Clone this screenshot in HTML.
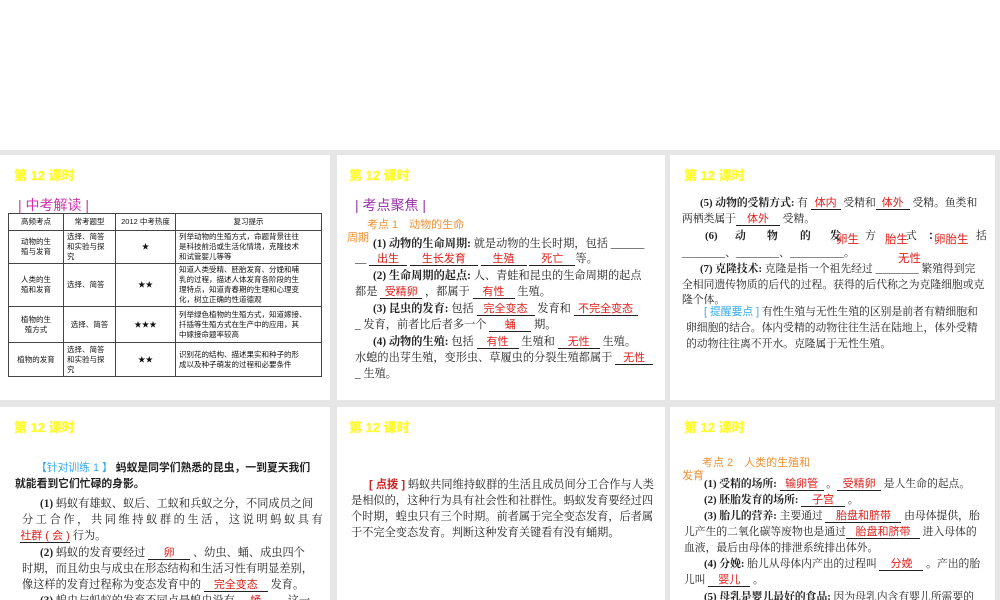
<!DOCTYPE html>
<html><head><meta charset="utf-8">
<style>
body{margin:0;width:1000px;height:600px;position:relative;overflow:hidden;background:#fff;font-family:"Liberation Serif","Noto Serif CJK SC",serif;}
.bg{position:absolute;left:0;top:150px;width:1000px;height:450px;background:#e6e6e6;}
.s{position:absolute;background:#fff;overflow:hidden;}
.t{position:absolute;left:14px;top:10px;font:bold 13px "Liberation Sans","Noto Sans CJK SC",sans-serif;color:#ffff22;text-shadow:0 0 1px #f0e060;}
.l{position:absolute;font-size:11.2px;line-height:16px;color:#222;white-space:nowrap;}
.s3 .l{font-size:10.8px;}
.r{color:#e0201c;font-family:"Liberation Sans","Noto Sans CJK SC",sans-serif;font-size:11px;display:inline-block;border-bottom:1px solid #222;line-height:12px;text-align:center;}
.rr{position:absolute;color:#e0201c;font:11.5px "Liberation Sans","Noto Sans CJK SC",sans-serif;}
.b{font-weight:bold;}
.sec{position:absolute;font:14px "Liberation Sans","Noto Sans CJK SC",sans-serif;}
table{position:absolute;left:8px;top:213px;width:314px;border-collapse:collapse;font:7.5px "Liberation Sans","Noto Sans CJK SC",sans-serif;color:#111;}
td{border:1px solid #444;padding:1px 3px;line-height:10px;}
.or{color:#f09030;font-family:"Liberation Sans","Noto Sans CJK SC",sans-serif;}
</style></head><body>
<div class="bg"></div>

<div class="s" style="left:0;top:155px;width:330px;height:245px;">
<div class="t">第 12 课时</div>
<div class="sec" style="left:18px;top:40px;color:#cc33aa;">| 中考解读 |</div>
</div>
<table style="top:213px;">
<tr style="height:17px"><td style="width:48px;text-align:center">高频考点</td><td style="width:45px;text-align:center">常考题型</td><td style="width:53px;text-align:center">2012 中考热度</td><td style="text-align:center">复习提示</td></tr>
<tr style="height:33px"><td style="text-align:center">动物的生<br>殖与发育</td><td>选择、简答<br>和实验与探<br>究</td><td style="text-align:center">★</td><td>列举动物的生殖方式，命题背景往往<br>是科技前沿或生活化情境，克隆技术<br>和试管婴儿等等</td></tr>
<tr style="height:43px"><td style="text-align:center">人类的生<br>殖和发育</td><td>选择、简答</td><td style="text-align:center">★★</td><td>知道人类受精、胚胎发育、分娩和哺<br>乳的过程，描述人体发育各阶段的生<br>理特点，知道青春期的生理和心理变<br>化，树立正确的性道德观</td></tr>
<tr style="height:36px"><td style="text-align:center">植物的生<br>殖方式</td><td style="text-align:center">选择、简答</td><td style="text-align:center">★★★</td><td>列举绿色植物的生殖方式，知道嫁接、<br>扦插等生殖方式在生产中的应用，其<br>中嫁接命题率较高</td></tr>
<tr style="height:34px"><td style="text-align:center">植物的发育</td><td>选择、简答<br>和实验与探<br>究</td><td style="text-align:center">★★</td><td>识别花的结构、描述果实和种子的形<br>成以及种子萌发的过程和必要条件</td></tr>
</table>

<div class="s" style="left:337px;top:155px;width:328px;height:245px;">
<div class="t" style="left:12px">第 12 课时</div>
<div class="sec" style="left:18px;top:40px;color:#9933aa;">| 考点聚焦 |</div>
<div class="l or" style="left:30px;top:62px;font-size:11px">考点 1　动物的生命</div>
<div class="l or" style="left:10px;top:75px;font-size:11px">周期</div>
<div class="l" style="left:36px;top:81px"><span class="b">(1) 动物的生命周期:</span> 就是动物的生长时期，包括 ______</div>
<div class="l" style="left:18px;top:96px">__ <span class="r" style="width:38px">出生</span> <span class="r" style="width:68px">生长发育</span> <span class="r" style="width:46px">生殖</span> <span class="r" style="width:46px">死亡</span>等。</div>
<div class="l" style="left:36px;top:113px"><span class="b">(2) 生命周期的起点:</span> 人、青蛙和昆虫的生命周期的起点</div>
<div class="l" style="left:18px;top:129px">都是 <span class="r" style="width:42px">受精卵</span> ，都属于 <span class="r" style="width:42px">有性</span> 生殖。</div>
<div class="l" style="left:36px;top:146px"><span class="b">(3) 昆虫的发育:</span> 包括 <span class="r" style="width:58px">完全变态</span> 发育和 <span class="r" style="width:64px">不完全变态</span></div>
<div class="l" style="left:18px;top:162px">_ 发育，前者比后者多一个 <span class="r" style="width:42px">蛹</span> 期。</div>
<div class="l" style="left:36px;top:179px"><span class="b">(4) 动物的生殖:</span> 包括 <span class="r" style="width:42px">有性</span> 生殖和 <span class="r" style="width:42px">无性</span> 生殖。</div>
<div class="l" style="left:18px;top:195px">水螅的出芽生殖，变形虫、草履虫的分裂生殖都属于 <span class="r" style="width:38px">无性</span></div>
<div class="l" style="left:18px;top:211px">_ 生殖。</div>
</div>

<div class="s s3" style="left:670px;top:155px;width:325px;height:245px;">
<div class="t" style="left:14px">第 12 课时</div>
<div class="l" style="left:30px;top:40px"><span class="b">(5) 动物的受精方式:</span> 有 <span class="r" style="width:30px">体内</span> 受精和<span class="r" style="width:34px">体外</span> 受精。鱼类和</div>
<div class="l" style="left:12px;top:56px">两栖类属于<span class="r" style="width:44px">体外</span> 受精。</div>
<div class="l b" style="left:35px;top:73px">(6)</div>
<div class="l b" style="left:65px;top:73px">动</div>
<div class="l b" style="left:97px;top:73px">物</div>
<div class="l b" style="left:130px;top:73px">的</div>
<div class="l b" style="left:160px;top:73px">发</div>
<div class="l" style="left:195px;top:73px">方</div>
<div class="l" style="left:236px;top:73px">式</div>
<div class="l b" style="left:258px;top:73px">：</div>
<div class="l" style="left:306px;top:73px">括</div>
<div class="rr" style="left:166px;top:76px">卵生</div>
<div class="rr" style="left:215px;top:76px">胎生</div>
<div class="rr" style="left:264px;top:76px">卵胎生</div>
<div class="l" style="left:12px;top:90px">________、________、__________。</div>
<div class="rr" style="left:228px;top:95px">无性</div>
<div class="l" style="left:30px;top:106px"><span class="b">(7) 克隆技术:</span> 克隆是指一个祖先经过 ________ 繁殖得到完</div>
<div class="l" style="left:12px;top:122px">全相同遗传物质的后代的过程。获得的后代称之为克隆细胞或克</div>
<div class="l" style="left:12px;top:137px">隆个体。</div>
<div class="l" style="left:34px;top:149px"><span style="color:#33aaee;font-family:'Liberation Sans','Noto Sans CJK SC',sans-serif">[ 提醒要点 ]</span> 有性生殖与无性生殖的区别是前者有精细胞和</div>
<div class="l" style="left:16px;top:165px">卵细胞的结合。体内受精的动物往往生活在陆地上，体外受精</div>
<div class="l" style="left:16px;top:181px">的动物往往离不开水。克隆属于无性生殖。</div>
</div>

<div class="s" style="left:0;top:407px;width:330px;height:193px;">
<div class="t">第 12 课时</div>
<div class="l b" style="left:36px;top:53px;font-family:'Liberation Sans','Noto Sans CJK SC',sans-serif;font-size:10.8px"><span style="color:#33aaee;font-weight:normal">【针对训练 1 】</span> 蚂蚁是同学们熟悉的昆虫，一到夏天我们</div>
<div class="l b" style="left:15px;top:69px;font-family:'Liberation Sans','Noto Sans CJK SC',sans-serif;font-size:10.8px">就能看到它们忙碌的身影。</div>
<div class="l" style="left:40px;top:89px"><span class="b">(1)</span> 蚂蚁有雄蚁、蚁后、工蚁和兵蚁之分，不同成员之间</div>
<div class="l" style="left:22px;top:105px;letter-spacing:2.6px">分工合作，共同维持蚁群的生活，这说明蚂蚁具有</div>
<div class="l" style="left:20px;top:121px"><span class="r" style="width:50px">社群 ( 会 )</span> 行为。</div>
<div class="l" style="left:40px;top:138px"><span class="b">(2)</span> 蚂蚁的发育要经过 <span class="r" style="width:42px">卵</span> 、幼虫、蛹、成虫四个</div>
<div class="l" style="left:22px;top:154px">时期，而且幼虫与成虫在形态结构和生活习性有明显差别，</div>
<div class="l" style="left:22px;top:170px">像这样的发育过程称为变态发育中的 <span class="r" style="width:64px">完全变态</span> 发育。</div>
<div class="l" style="left:40px;top:186px"><span class="b">(3)</span> 蝗虫与蚂蚁的发育不同点是蝗虫没有 <span class="r" style="width:36px">蛹</span> ，这一</div>
</div>

<div class="s" style="left:337px;top:407px;width:328px;height:193px;">
<div class="t" style="left:12px">第 12 课时</div>
<div class="l" style="left:32px;top:70px"><span style="color:#cc2222;font-weight:bold;font-family:'Liberation Sans','Noto Sans CJK SC',sans-serif">[ 点拨 ]</span> 蚂蚁共同维持蚁群的生活且成员间分工合作与人类</div>
<div class="l" style="left:14px;top:86px">是相似的，这种行为具有社会性和社群性。蚂蚁发育要经过四</div>
<div class="l" style="left:14px;top:102px">个时期，蝗虫只有三个时期。前者属于完全变态发育，后者属</div>
<div class="l" style="left:14px;top:118px">于不完全变态发育。判断这种发育关键看有没有蛹期。</div>
</div>

<div class="s s3" style="left:670px;top:407px;width:325px;height:193px;">
<div class="t" style="left:14px">第 12 课时</div>
<div class="l or" style="left:32px;top:48px;font-size:11px">考点 2　人类的生殖和</div>
<div class="l or" style="left:12px;top:61px;font-size:11px">发育</div>
<div class="l" style="left:34px;top:69px"><span class="b">(1) 受精的场所:</span> <span class="r" style="width:44px">输卵管</span> 。<span class="r" style="width:44px">受精卵</span> 是人生命的起点。</div>
<div class="l" style="left:34px;top:85px"><span class="b">(2) 胚胎发育的场所:</span> <span class="r" style="width:44px">子宫</span> 。</div>
<div class="l" style="left:34px;top:101px"><span class="b">(3) 胎儿的营养:</span> 主要通过 <span class="r" style="width:76px">胎盘和脐带</span> 由母体提供，胎</div>
<div class="l" style="left:14px;top:117px">儿产生的二氧化碳等废物也是通过<span class="r" style="width:74px">胎盘和脐带</span> 进入母体的</div>
<div class="l" style="left:14px;top:133px">血液，最后由母体的排泄系统排出体外。</div>
<div class="l" style="left:34px;top:149px"><span class="b">(4) 分娩:</span> 胎儿从母体内产出的过程叫 <span class="r" style="width:44px">分娩</span> 。产出的胎</div>
<div class="l" style="left:14px;top:165px">儿叫 <span class="r" style="width:42px">婴儿</span> 。</div>
<div class="l" style="left:34px;top:182px"><span class="b">(5) 母乳是婴儿最好的食品:</span> 因为母乳内含有婴儿所需要的</div>
</div>
</body></html>
